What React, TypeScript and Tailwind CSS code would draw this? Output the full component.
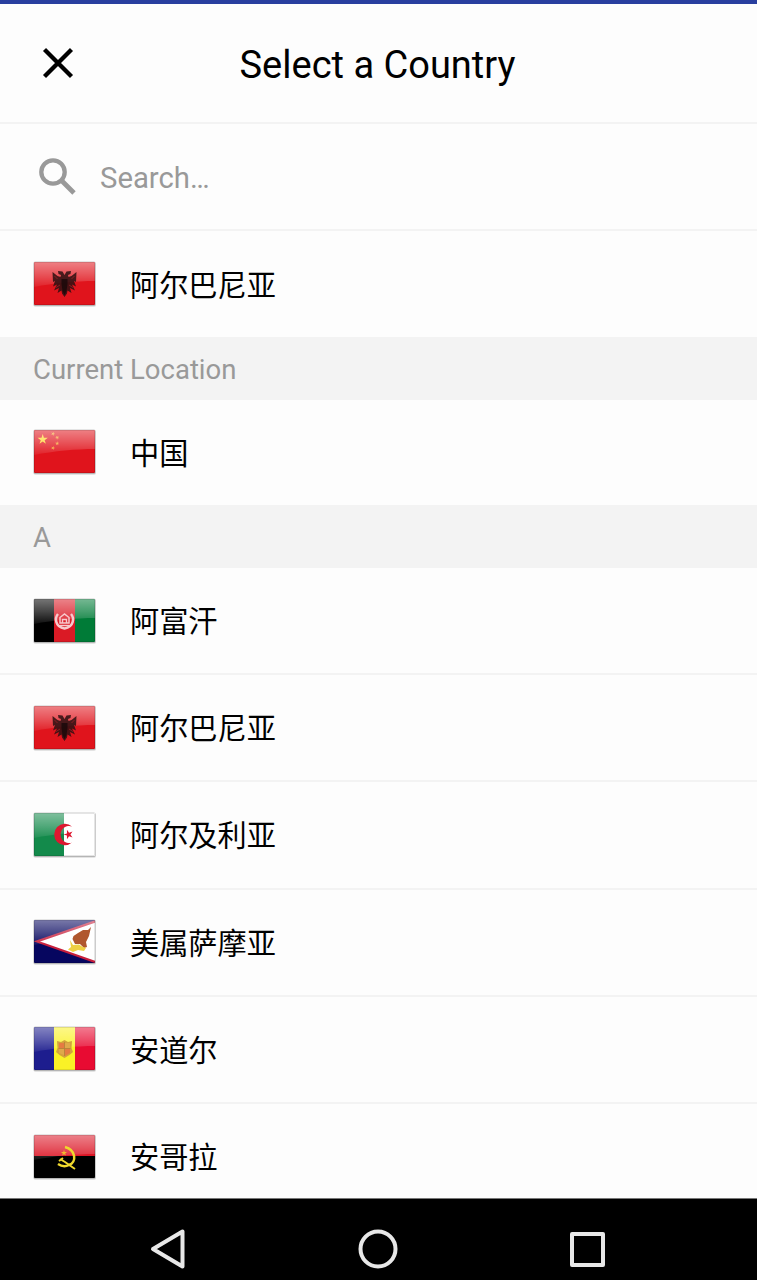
import type { ReactNode } from 'react';

const STAR = '0,-1 .225,-.309 .951,-.309 .363,.118 .588,.809 0,.382 -.588,.809 -.363,.118 -.951,-.309 -.225,-.309';

function Star({ x, y, r, fill, rotate = 0 }: { x: number; y: number; r: number; fill: string; rotate?: number }) {
  return <polygon points={STAR} fill={fill} transform={`translate(${x} ${y}) rotate(${rotate}) scale(${r})`} />;
}

type FlagCode = 'al' | 'cn' | 'af' | 'dz' | 'as' | 'ad' | 'ao';

const FLAGS: Record<FlagCode, ReactNode> = {
  al: (
    <rect width="61" height="43" fill="#e0141c" />
  ),
  cn: (
    <>
      <rect width="61" height="43" fill="#e0141c" />
      <Star x={8.700} y={9.500} r={5.400} fill="#ffd62e" />
      <Star x={19} y={3.800} r={2.200} fill="#f4a030" rotate={20} />
      <Star x={23.200} y={7.500} r={2.200} fill="#f4a030" rotate={40} />
      <Star x={23.200} y={13.500} r={2.200} fill="#f4a030" />
      <Star x={19} y={18} r={2.200} fill="#f4a030" rotate={20} />
    </>
  ),
  af: (
    <>
      <rect width="20" height="43" fill="#000" />
      <rect x="20" width="21" height="43" fill="#da1a25" />
      <rect x="41" width="20" height="43" fill="#007b37" />
    </>
  ),
  dz: (
    <>
      <rect width="30" height="43" fill="#138a4b" />
      <rect x="30" width="31" height="43" fill="#fff" />
    </>
  ),
  as: (
    <>
      <rect width="61" height="43" fill="#06065f" />
      <path d="M64 .5 L3 21.500 L64 43Z" fill="#fff" stroke="#c81e3b" strokeWidth="2.200" />
    </>
  ),
  ad: (
    <>
      <rect width="20" height="43" fill="#1d1d8e" />
      <rect x="20" width="21" height="43" fill="#faf126" />
      <rect x="41" width="20" height="43" fill="#e80b32" />
    </>
  ),
  ao: (
    <>
      <rect width="61" height="21" fill="#dc1626" />
      <rect y="21" width="61" height="22" fill="#000" />
    </>
  ),
};

const EMBLEMS: Partial<Record<FlagCode, ReactNode>> = {
  al: (
    <>
      <path
        d="M30.500 13 L28.500 9.500 L24 9 L24.500 12 L27 13 L26.500 15 L23.500 14 L18.500 10 L19 20 L21 19 L19 24.500 L23 22.500 L20 28.500 L25 26 L23.500 31 L27.500 28.500 L28 31.500 L30.500 35 L33 31.500 L33.500 28.500 L37.500 31 L36 26 L41 28.500 L38 22.500 L42 24.500 L40 19 L42 20 L42.500 10 L37.500 14 L34.500 15 L34 13 L36.500 12 L37 9 L32.500 9.500Z"
        fill="#2b1012"
        opacity=".85"
      />
      <path d="M27.500 17 H33.500 V22 L32.500 29 L30.500 33 L28.500 29 L27.500 22Z" fill="#18090a" opacity=".8" />
      <path d="M20.500 14 L23.500 17 M40.500 14 L37.500 17 M22 25.500 L26 23 M39 25.500 L35 23" stroke="#9c2026" strokeWidth=".8" />
    </>
  ),
  af: (
    <g fill="none" stroke="#f7c9cc">
      <path d="M24 15 C20.500 19 21 28 30.500 29.500 C40 28 40.500 19 37 15" strokeWidth="2.500" />
      <path d="M26 18.500 L30.500 15 L35 18.500 V24 H26Z M28.500 24 V20.500 H32.500 V24 M26 26.500 H35" strokeWidth="1.500" />
    </g>
  ),
  dz: (
    <>
      <path d="M38 13.500 A10.700 10.700 0 1 0 38 29.500 A8.500 8.500 0 1 1 38 13.500Z" fill="#dd1830" />
      <Star x={34.500} y={21.500} r={5} fill="#dd1830" rotate={-18} />
    </>
  ),
  as: (
    <>
      <path d="M57 7 L54 10 L49 10 L44 13 L39.500 16 L38.500 19 L41 24 L46 24 L50 28 L53 27 L52 22 L55 16Z" fill="#b0572e" />
      <path d="M36 20 L39 25 L45 24.500 L48 26.500 L52 28 L50 31 L44 30 L39 32 L34 29.500 L37 27Z" fill="#eed043" />
    </>
  ),
  ad: (
    <>
      <path d="M23 14 L27 15 L30.500 13 L34 15 L38 14 L37.500 21 L39 25 L35.500 28 L30.500 31 L25.500 28 L22 25 L23.500 21Z" fill="#d3a33c" />
      <path d="M25 16 H30 V21 H25Z M31 22 H36 V26 L31 29Z" fill="#e57b42" />
      <path d="M31 16 H36 V21 H31Z M25 22 H30 V28 L25 26Z" fill="#dfa94b" />
      <path d="M24.500 21.500 H36.500 M30.500 15 V29" stroke="#b57e3a" strokeWidth=".8" />
    </>
  ),
  ao: (
    <>
      <g fill="none" stroke="#efd82d">
        <path d="M31 12 C42 15 43 27 35 30 C31 32 27 31 24 29" strokeWidth="2.500" />
        <path d="M26 24 L31 27 L41 34 M25 26 L29 23" strokeWidth="2" />
      </g>
      <Star x={30} y={18} r={3.200} fill="#f0b62e" />
    </>
  ),
};

function Flag({ code }: { code: FlagCode }) {
  return (
    <svg viewBox="0 0 64 48" className="h-12 w-16 shrink-0" aria-hidden="true">
      <defs>
        <linearGradient id="gloss" x1="0" y1="0" x2="0" y2="1">
          <stop offset="0" stopColor="#fff" stopOpacity=".46" />
          <stop offset=".5" stopColor="#fff" stopOpacity=".27" />
          <stop offset="1" stopColor="#fff" stopOpacity=".06" />
        </linearGradient>
        <clipPath id="flagEdge">
          <rect width="61" height="43" rx="1" />
        </clipPath>
      </defs>
      <rect x="1.500" y="2" width="62.500" height="45" rx="2" fill="#000" opacity=".1" />
      <rect x="1.500" y="1.500" width="62" height="44.500" rx="1.500" fill="#000" opacity=".2" />
      <g transform="translate(2 2)" clipPath="url(#flagEdge)">
        {FLAGS[code]}
        <path d="M0 0 H61 V19 C42 19 20 21 0 25Z" fill="url(#gloss)" />
        {EMBLEMS[code]}
        <rect x=".5" y=".5" width="60" height="42" rx="1" fill="none" stroke="#000" strokeOpacity=".1" />
      </g>
    </svg>
  );
}

function CountryRow({ code, name, divided = false }: { code: FlagCode; name: string; divided?: boolean }) {
  return (
    <li
      className={
        divided
          ? 'flex h-[107.2px] shrink-0 items-center border-b-2 border-[#f3f3f3] pl-[32px]'
          : 'flex h-[105px] shrink-0 items-center pb-px pl-[32px]'
      }
    >
      <Flag code={code} />
      <span className="ml-[34px] pt-[3px] text-[29.200px] leading-9 font-normal">{name}</span>
    </li>
  );
}

function SectionHeader({ children }: { children: ReactNode }) {
  return (
    <h2 className="flex h-[63px] shrink-0 items-center bg-[#f3f3f3] pt-[2px] pl-[33px] text-[27.500px] text-[#999]">{children}</h2>
  );
}

const COUNTRIES: { code: FlagCode; name: string }[] = [
  { code: 'af', name: '阿富汗' },
  { code: 'al', name: '阿尔巴尼亚' },
  { code: 'dz', name: '阿尔及利亚' },
  { code: 'as', name: '美属萨摩亚' },
  { code: 'ad', name: '安道尔' },
  { code: 'ao', name: '安哥拉' },
];

export default function App() {
  return (
    <div className="flex h-[1280px] w-[757px] flex-col overflow-hidden bg-[#fdfdfd] font-[Roboto,'Noto_Sans_CJK_SC',sans-serif] text-black">
      <div className="h-1 shrink-0 bg-[#293f9f]" />
      <header className="grid h-[120px] shrink-0 grid-cols-[116px_1fr_118px] items-center border-b-2 border-[#f3f3f3]">
        <button className="flex justify-center" aria-label="Close">
          <svg viewBox="0 0 32 32" className="h-8 w-8" fill="none" stroke="#000" strokeWidth="4.300">
            <path d="M2.500 2.500 L29.500 29.500 M29.500 2.500 L2.500 29.500" />
          </svg>
        </button>
        <h1 className="pt-1 text-center text-[38px] leading-none whitespace-nowrap">Select a Country</h1>
      </header>
      <div className="flex h-[107px] shrink-0 items-center border-b-2 border-[#f3f3f3] pb-px pl-[38px]">
        <svg viewBox="0 0 38 38" className="mb-px h-[38px] w-[38px]" fill="none" stroke="#999" aria-hidden="true">
          <circle cx="15" cy="15" r="11.700" strokeWidth="4.300" />
          <path d="M23.500 23.500 L36 36" strokeWidth="4.800" />
        </svg>
        <span className="pt-1 pl-6 text-[29.300px] leading-9 text-[#999]">Search…</span>
      </div>
      <main className="flex min-h-0 flex-1 flex-col overflow-hidden">
        <ul className="pt-px">
          <CountryRow code="al" name="阿尔巴尼亚" />
        </ul>
        <SectionHeader>Current Location</SectionHeader>
        <ul>
          <CountryRow code="cn" name="中国" />
        </ul>
        <SectionHeader>A</SectionHeader>
        <ul>
          {COUNTRIES.map((country) => (
            <CountryRow key={country.code} code={country.code} name={country.name} divided />
          ))}
        </ul>
      </main>
      <nav className="flex h-[82px] shrink-0 items-center justify-between border-t border-[#777] bg-black pt-[18px] pr-[151px] pl-[149px]">
        <svg viewBox="0 0 38 42" className="h-[42px] w-[38px]" fill="none" stroke="#e8e8e8" strokeWidth="4" strokeLinejoin="round">
          <path d="M4 21 L33.500 3.500 V38.500Z" />
        </svg>
        <svg viewBox="0 0 42 42" className="h-[42px] w-[42px]" fill="none" stroke="#e8e8e8" strokeWidth="4">
          <circle cx="21" cy="21" r="17.500" />
        </svg>
        <svg viewBox="0 0 38 38" className="h-[38px] w-[38px]" fill="none" stroke="#e8e8e8" strokeWidth="4" strokeLinejoin="round">
          <rect x="4" y="4" width="31" height="31" />
        </svg>
      </nav>
    </div>
  );
}
